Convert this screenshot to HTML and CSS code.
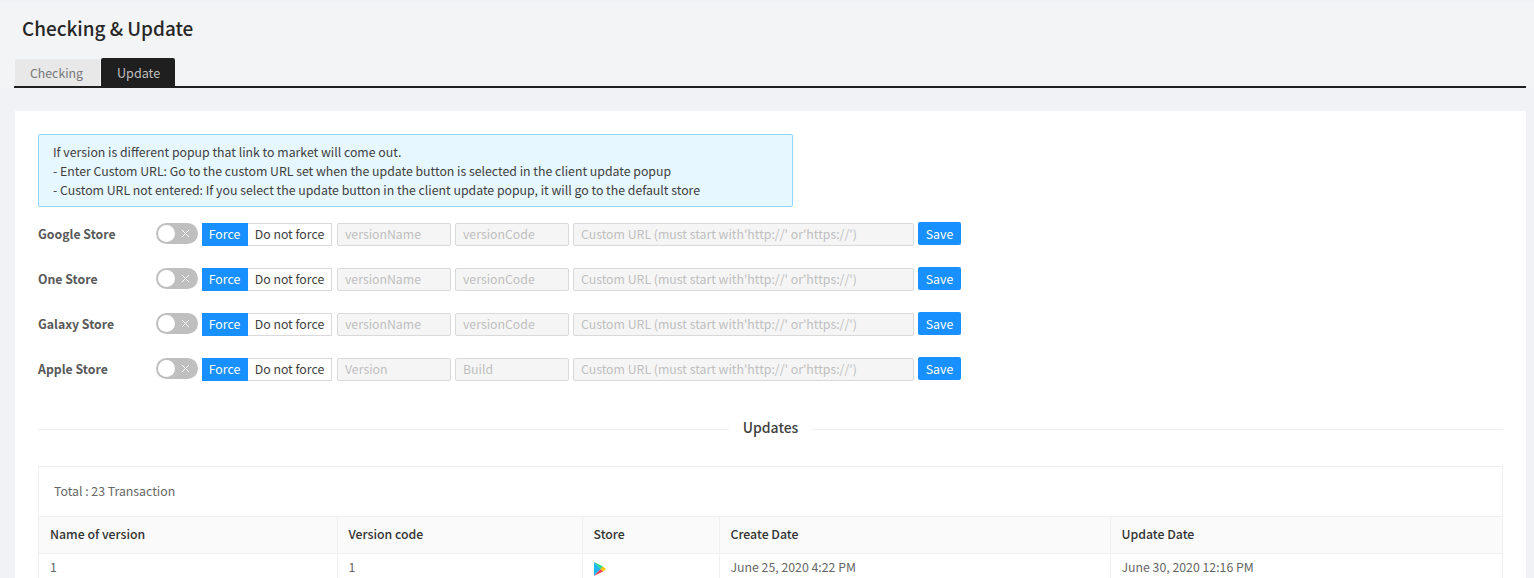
FILE: index.html
```html
<!DOCTYPE html>
<html lang="en">
<head>
    <meta charset="UTF-8">
    <meta name="viewport" content="width=device-width, initial-scale=1.0">
    <title>Checking &amp; Update</title>
    <link rel="stylesheet" href="styles.css">
</head>
<body>
    <div class="page-head">
        <h1>Checking &amp; Update</h1>
        <div class="tabs">
            <a class="tab">Checking</a>
            <a class="tab active">Update</a>
        </div>
    </div>

    <div class="card">
        <div class="notice">
            If version is different popup that link to market will come out.<br>
            - Enter Custom URL: Go to the custom URL set when the update button is selected in the client update popup<br>
            - Custom URL not entered: If you select the update button in the client update popup, it will go to the default store
        </div>

        <div class="store-row">
            <label class="store-name">Google Store</label>
            <span class="switch"><span class="knob"></span><svg class="switch-x" width="9" height="9" viewBox="0 0 9 9"><path d="M1 1l7 7M8 1l-7 7"/></svg></span>
            <div class="radio-group"><span class="radio on">Force</span><span class="radio">Do not force</span></div>
            <input class="field short" placeholder="versionName" disabled>
            <input class="field short" placeholder="versionCode" disabled>
            <input class="field url" placeholder="Custom URL (must start with'http://' or'https://')" disabled>
            <button class="save">Save</button>
        </div>
        <div class="store-row">
            <label class="store-name">One Store</label>
            <span class="switch"><span class="knob"></span><svg class="switch-x" width="9" height="9" viewBox="0 0 9 9"><path d="M1 1l7 7M8 1l-7 7"/></svg></span>
            <div class="radio-group"><span class="radio on">Force</span><span class="radio">Do not force</span></div>
            <input class="field short" placeholder="versionName" disabled>
            <input class="field short" placeholder="versionCode" disabled>
            <input class="field url" placeholder="Custom URL (must start with'http://' or'https://')" disabled>
            <button class="save">Save</button>
        </div>
        <div class="store-row">
            <label class="store-name">Galaxy Store</label>
            <span class="switch"><span class="knob"></span><svg class="switch-x" width="9" height="9" viewBox="0 0 9 9"><path d="M1 1l7 7M8 1l-7 7"/></svg></span>
            <div class="radio-group"><span class="radio on">Force</span><span class="radio">Do not force</span></div>
            <input class="field short" placeholder="versionName" disabled>
            <input class="field short" placeholder="versionCode" disabled>
            <input class="field url" placeholder="Custom URL (must start with'http://' or'https://')" disabled>
            <button class="save">Save</button>
        </div>
        <div class="store-row">
            <label class="store-name">Apple Store</label>
            <span class="switch"><span class="knob"></span><svg class="switch-x" width="9" height="9" viewBox="0 0 9 9"><path d="M1 1l7 7M8 1l-7 7"/></svg></span>
            <div class="radio-group"><span class="radio on">Force</span><span class="radio">Do not force</span></div>
            <input class="field short" placeholder="Version" disabled>
            <input class="field short" placeholder="Build" disabled>
            <input class="field url" placeholder="Custom URL (must start with'http://' or'https://')" disabled>
            <button class="save">Save</button>
        </div>

        <div class="divider"><span class="divider-text">Updates</span></div>

        <div class="list-box">
            <div class="total">Total : 23 Transaction</div>
            <table>
                <colgroup>
                    <col class="col-name">
                    <col class="col-code">
                    <col class="col-store">
                    <col class="col-create">
                    <col>
                </colgroup>
                <thead>
                    <tr>
                        <th>Name of version</th>
                        <th>Version code</th>
                        <th>Store</th>
                        <th>Create Date</th>
                        <th>Update Date</th>
                    </tr>
                </thead>
                <tbody>
                    <tr>
                        <td>1</td>
                        <td>1</td>
                        <td>
                            <svg class="play" width="12" height="14" viewBox="0 0 12 14">
                                <polygon points="0,0 0,14 6.6,7" fill="#1fb6f2"/>
                                <polygon points="0,0 6.6,7 9,4.6" fill="#22d68a"/>
                                <polygon points="0,14 6.6,7 9,9.4" fill="#f0405a"/>
                                <polygon points="9,4.6 12,7 9,9.4 6.6,7" fill="#fdc70c"/>
                            </svg>
                        </td>
                        <td>June 25, 2020 4:22 PM</td>
                        <td>June 30, 2020 12:16 PM</td>
                    </tr>
                </tbody>
            </table>
        </div>
    </div>
</body>
</html>
```

FILE: styles.css
```css
html, body {
    height: 100%;
}
body {
    margin: 0;
    overflow: hidden;
    background-color: #f0f2f5;
    font-family: "Noto Sans CJK KR", "Noto Sans", sans-serif;
    font-size: 12.3px;
    color: #595959;
}
.page-head {
    background-color: #f3f4f6;
    margin-top: 1px;
    padding: 0 8px 0 14px;
}
h1 {
    margin: 0;
    padding: 13px 0 0 8px;
    height: 43px;
    font-size: 18.9px;
    line-height: 28px;
    font-weight: 500;
    color: #262626;
}
.tabs {
    display: flex;
    align-items: flex-end;
    gap: 1px;
    height: 29px;
    border-bottom: 2px solid #1f1f1f;
}
.tab {
    height: 27px;
    line-height: 29px;
    padding: 0 17px 0 15px;
    background-color: #e8e8e8;
    color: #777;
    border-radius: 2px 2px 0 0;
}
.tab:first-child {
    margin-left: 1px;
}
.tab.active {
    height: 28px;
    line-height: 29px;
    padding: 0 15px 0 16px;
    font-size: 12.6px;
    background-color: #1f1f1f;
    color: #bfbfbf;
}
.card {
    margin: 23px 8px 0 15px;
    padding: 23px 23px 0;
    background: #fff;
}
.notice {
    box-sizing: border-box;
    width: 755px;
    height: 73px;
    margin-bottom: 16px;
    padding: 8px 14px;
    background-color: #e6f7ff;
    border: 1px solid #91d5ff;
    border-radius: 2px;
    line-height: 19px;
    color: #404040;
}
.store-row {
    display: flex;
    align-items: center;
    height: 23px;
    margin-bottom: 22px;
}
.store-name {
    width: 118px;
    margin-top: -2px;
    font-weight: 700;
    color: #595959;
}
.switch {
    position: relative;
    box-sizing: border-box;
    width: 42px;
    height: 21px;
    margin-right: 4px;
    align-self: flex-start;
    background-color: #bfbfbf;
    border-radius: 11px;
}
.knob {
    position: absolute;
    left: 2px;
    top: 2px;
    width: 17px;
    height: 17px;
    background: #fff;
    border-radius: 50%;
}
.switch-x {
    position: absolute;
    right: 8px;
    top: 6px;
    fill: none;
    stroke: #fff;
    stroke-width: 1;
}
.radio-group {
    display: flex;
    margin-right: 5px;
}
.radio {
    box-sizing: border-box;
    height: 23px;
    width: 84px;
    line-height: 21px;
    text-align: center;
    background: #fff;
    border: 1px solid #d9d9d9;
    border-left: 0;
    color: #404040;
}
.radio.on {
    width: 46px;
    background-color: #1890ff;
    border-color: #1890ff;
    color: #fff;
}
.field {
    box-sizing: border-box;
    height: 23px;
    margin-right: 4px;
    padding: 0 7px 2px;
    background-color: #f5f5f5;
    border: 1px solid #d9d9d9;
    border-radius: 2px;
    font: inherit;
}
.field::placeholder {
    color: #bfbfbf;
    opacity: 1;
}
.short {
    width: 114px;
}
.url {
    width: 341px;
}
.save {
    width: 43px;
    height: 23px;
    margin-top: -2px;
    padding: 0;
    background-color: #1890ff;
    border: none;
    border-radius: 2px;
    font: inherit;
    color: #fff;
}
.divider {
    display: flex;
    align-items: center;
    gap: 14px;
    margin-top: 36px;
    height: 24px;
    font-size: 14px;
    font-weight: 500;
    color: #404040;
}
.divider-text {
    margin-top: -4px;
}
.divider::before,
.divider::after {
    content: "";
    flex: 1;
    border-top: 1px solid #f0f0f0;
}
.list-box {
    margin-top: 25px;
    border: 1px solid #f0f0f0;
}
.total {
    height: 49px;
    padding-left: 15px;
    line-height: 48px;
    color: #666;
}
table {
    width: 100%;
    table-layout: fixed;
    border-collapse: collapse;
}
.col-name {
    width: 298px;
}
.col-code {
    width: 245px;
}
.col-store {
    width: 137px;
}
.col-create {
    width: 391px;
}
th, td {
    padding: 0 11px 2px;
    text-align: left;
    border-top: 1px solid #f0f0f0;
    border-left: 1px solid #f0f0f0;
}
th:first-child, td:first-child {
    border-left: 0;
}
th {
    height: 34px;
    background-color: #fafafa;
    font-weight: 500;
    color: #333;
}
td {
    height: 26px;
    color: #666;
}
.play {
    display: block;
    margin-top: 3px;
}
```
